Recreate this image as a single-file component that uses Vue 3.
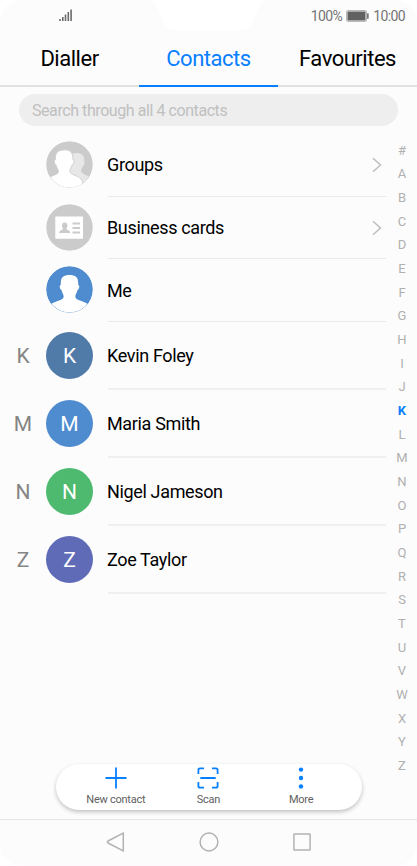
<script setup>
const tabs = ['Dialler', 'Contacts', 'Favourites']
const contacts = [
  { letter: 'K', name: 'Kevin Foley', tone: 'steel' },
  { letter: 'M', name: 'Maria Smith', tone: 'blue' },
  { letter: 'N', name: 'Nigel Jameson', tone: 'green' },
  { letter: 'Z', name: 'Zoe Taylor', tone: 'violet' },
]
const index = '#ABCDEFGHIJKLMNOPQRSTUVWXYZ'.split('')
</script>

<template>
  <div class="phone">
    <svg class="notch" width="118" height="31" viewBox="0 0 118 31">
      <path d="M0 0C5 1 7 4 9 9L13 19C16 27 20 30.500 28 30.500H90C98 30.500 102 27 105 19L109 9C111 4 113 1 118 0Z" fill="#fff" />
    </svg>
    <header class="status">
      <svg class="signal" width="14" height="13" viewBox="0 0 14 13" fill="#6b6b6b">
        <path d="M.2 10H1.800V12H.2ZM3 8H4.600V12H3ZM5.700 5.500H7.300V12H5.700ZM8.500 3H10.100V12H8.500ZM11.300.5H12.900V12H11.300Z" />
      </svg>
      <div class="power">
        <span>100%</span>
        <svg width="23" height="12" viewBox="0 0 23 12">
          <rect x=".6" y=".6" width="19.800" height="10.800" rx="1" fill="none" stroke="#b0b0b0" stroke-width="1" />
          <rect x="1.500" y="1.500" width="18" height="9" fill="#616161" />
          <rect x="21" y="3.300" width="1.700" height="5.400" rx=".5" fill="#777" />
        </svg>
        <span>10:00</span>
      </div>
    </header>

    <nav class="tabs">
      <div v-for="tab in tabs" :key="tab" class="tab" :class="{ active: tab === 'Contacts' }">{{ tab }}</div>
    </nav>

    <div class="search">Search through all 4 contacts</div>

    <main class="content">
      <section class="list">
        <div class="row">
          <span class="section"></span>
          <svg class="avatar" viewBox="0 0 47 47">
            <defs><clipPath id="group-disc"><circle cx="23.500" cy="23.500" r="22.900" /></clipPath></defs>
            <circle cx="23.500" cy="23.500" r="23.300" fill="#cbcbcb" />
            <g clip-path="url(#group-disc)">
              <path d="M26 13C28 12 31 11.700 34 12.400C37.500 13.200 38.500 15.600 38 20C39.300 21 38.500 23.500 37.200 24.500C36.800 27 35.200 27.800 35 29.200C35 32.500 40 33.500 44 36L36 48H22V28Z" fill="#e7e7e7" />
              <path d="M18 8.900C24 8.500 27.300 11.600 26.800 18.500C28.700 19 28 23 26 24C25.500 27 23.700 28.200 23.700 30C23.700 34 31 33.800 35 38C37 40 36.700 43 36.500 47H5L2 37C7 34 12.500 33.600 12.500 30.500C12.500 28.500 10.700 27.500 10.200 24C8.200 23 7.700 19 9.500 18.500C9 11.600 12 9.200 18 8.900Z" fill="#fff" stroke="#cbcbcb" stroke-width=".8" />
            </g>
          </svg>
          <div class="label"><span>Groups</span>
            <svg class="chevron" width="10" height="16" viewBox="0 0 10 16"><path d="M1 1.200L8.500 8L1 14.800" /></svg>
          </div>
        </div>
        <div class="row">
          <span class="section"></span>
          <svg class="avatar" viewBox="0 0 47 47">
            <circle cx="23.500" cy="23.500" r="23.300" fill="#cbcbcb" />
            <rect x="9.300" y="12.600" width="27.700" height="22.200" rx=".7" fill="#fff" />
            <path d="M18.700 18.600C20.800 18.600 21.500 20 21.400 21.800C21.300 23.200 20.700 23.900 20.500 24.700C20.500 26.200 24.300 26 24.300 29H13.100C13.100 26 16.900 26.200 16.900 24.700C16.700 23.900 16.100 23.200 16 21.800C15.900 20 16.600 18.600 18.700 18.600Z" fill="#cbcbcb" />
            <path d="M26.500 19.500H34M26.500 24H34M26.500 28.500H34" stroke="#cbcbcb" stroke-width="1.800" />
          </svg>
          <div class="label"><span>Business cards</span>
            <svg class="chevron" width="10" height="16" viewBox="0 0 10 16"><path d="M1 1.200L8.500 8L1 14.800" /></svg>
          </div>
        </div>
        <div class="row">
          <span class="section"></span>
          <svg class="avatar" viewBox="0 0 47 47">
            <defs><clipPath id="me-disc"><circle cx="23.500" cy="23.500" r="22.900" /></clipPath></defs>
            <circle cx="23.500" cy="23.500" r="23.300" fill="#4f8ccf" />
            <path clip-path="url(#me-disc)" d="M23.500 9C29.500 9 32.700 11 32.200 19C34 19.300 33.300 23 31.500 24C31 27 29.300 28.400 29.300 30.500C29.300 34.500 37 34.500 43 38.500V48H4V38.500C10 34.500 17.700 34.500 17.700 30.500C17.700 28.400 16 27 15.500 24C13.700 23 13 19.300 14.800 19C14.300 11 17.500 9 23.500 9Z" fill="#fff" />
          </svg>
          <div class="label"><span>Me</span></div>
        </div>
        <div v-for="person in contacts" :key="person.name" class="row tall">
          <span class="section">{{ person.letter }}</span>
          <span class="avatar" :class="person.tone">{{ person.letter }}</span>
          <div class="label"><span>{{ person.name }}</span></div>
        </div>
      </section>
      <aside class="index">
        <span v-for="letter in index" :key="letter" :class="{ current: letter === 'K' }">{{ letter }}</span>
      </aside>
    </main>

    <div class="actions">
      <div class="action">
        <svg width="22" height="22" viewBox="0 0 22 22"><path d="M11 .5V21.500M.5 11H21.500" /></svg>
        <span>New contact</span>
      </div>
      <div class="action">
        <svg width="22" height="22" viewBox="0 0 22 22"><path d="M1.400 7V3Q1.400 1.300 3 1.300H7M15 1.300H19Q20.600 1.300 20.600 3V7M1.400 15V19Q1.400 20.700 3 20.700H7M15 20.700H19Q20.600 20.700 20.600 19V15M3.300 11H18.700" /></svg>
        <span>Scan</span>
      </div>
      <div class="action">
        <svg class="dots" width="22" height="22" viewBox="0 0 22 22"><circle cx="11" cy="2.600" r="2.200" /><circle cx="11" cy="11" r="2.200" /><circle cx="11" cy="19.400" r="2.200" /></svg>
        <span>More</span>
      </div>
    </div>

    <footer class="system">
      <svg width="20" height="20" viewBox="0 0 20 20"><path d="M17.300 1.200V18.800L2 11Q.7 10 2 9Z" /></svg>
      <svg width="20" height="20" viewBox="0 0 20 20"><circle cx="10" cy="10" r="8.900" /></svg>
      <svg width="20" height="20" viewBox="0 0 20 20"><rect x="1.900" y="1.900" width="16.200" height="16.200" rx=".5" /></svg>
    </footer>
  </div>
</template>

<style>
body { background: #fff; }
</style>

<style scoped>
.phone {
  position: relative;
  box-sizing: border-box;
  width: 417px;
  height: 866px;
  display: flex;
  flex-direction: column;
  background: #fcfcfc;
  border-radius: 22px;
  overflow: hidden;
  font-family: Roboto, sans-serif;
  color: #000;
}
.notch { position: absolute; left: 149px; top: 0; }
.status {
  height: 31px;
  flex: none;
  box-sizing: border-box;
  padding: 0 12px 0 59px;
  display: flex;
  justify-content: space-between;
  align-items: center;
}
.signal { margin-bottom: 1px; }
.power { display: flex; align-items: center; gap: 4px; font-size: 14px; letter-spacing: -.6px; color: #757575; }
.tabs { height: 56px; flex: none; display: grid; grid-template-columns: repeat(3, 1fr); }
.tab {
  box-sizing: border-box;
  padding-top: 1px;
  border-bottom: 2px solid #e2e2e2;
  display: flex;
  align-items: center;
  justify-content: center;
  font-size: 22px;
  letter-spacing: -.48px;
}
.tab.active { color: #087fff; border-color: #087fff; }
.search {
  flex: none;
  height: 32px;
  margin: 7px 19px 0;
  padding-left: 13px;
  border-radius: 16px;
  background: #eee;
  color: #c0c0c0;
  font-size: 16px;
  letter-spacing: -.43px;
  line-height: 34px;
}
.content { flex: none; height: 638px; display: flex; justify-content: space-between; }
.list { width: 386px; padding-top: 7px; box-sizing: border-box; }
.row { height: 62.7px; display: flex; align-items: center; }
.row.tall { height: 68px; }
.section { width: 46px; flex: none; text-align: center; font-size: 21px; color: #858585; padding-top: 1px; }
.avatar {
  width: 47px;
  height: 47px;
  flex: none;
  box-sizing: border-box;
  border-radius: 50%;
  display: flex;
  align-items: center;
  justify-content: center;
  font-size: 21px;
  color: #fff;
}
.tall .avatar { padding-top: 1px; }
.steel { background: #507ba9; }
.blue { background: #4f8ccf; }
.green { background: #4dba70; }
.violet { background: #5f6bb6; }
.label {
  flex: 1;
  align-self: flex-start;
  height: calc(100% + 1px);
  box-sizing: border-box;
  margin-left: 15px;
  padding-right: 4px;
  display: flex;
  align-items: center;
  justify-content: space-between;
  font-size: 18px;
  letter-spacing: -.35px;
  background: linear-gradient(#e9e9e9, #e9e9e9) 0 100% / 100% 1px no-repeat;
  text-indent: -1px;
}
.tall .label { background: linear-gradient(#f0f0f0, #f0f0f0) 0 100% / 100% 2px no-repeat; }
.chevron { fill: none; stroke: #bdbdbd; stroke-width: 1.5; }
.index { width: 30px; padding-top: 12.6px; display: flex; flex-direction: column; }
.index span { height: 23.68px; line-height: 23.68px; text-align: center; font-size: 13px; color: #b0b0b0; }
.index .current { color: #087fff; font-weight: 700; }
.actions {
  flex: none;
  width: 306px;
  height: 45.5px;
  margin-left: 55.5px;
  box-sizing: border-box;
  padding: 3px 14px 0;
  display: grid;
  grid-template-columns: repeat(3, 1fr);
  border-radius: 23px;
  background: #fff;
  box-shadow: 0 2px 4px rgba(0, 0, 0, .24);
}
.action { display: flex; flex-direction: column; align-items: center; gap: 4px; font-size: 11px; letter-spacing: -.25px; line-height: 14px; color: #616161; }
.action svg { fill: none; stroke: #087fff; stroke-width: 1.8; }
.action .dots { fill: #087fff; stroke: none; }
.system {
  flex: none;
  height: 46.5px;
  box-sizing: border-box;
  margin-top: 9px;
  padding: 0 69px;
  display: grid;
  grid-template-columns: repeat(3, 1fr);
  place-items: center;
  border-top: 1px solid #e5e5e5;
}
.system svg { fill: none; stroke: #b2b2b2; stroke-width: 1.5; }
</style>
